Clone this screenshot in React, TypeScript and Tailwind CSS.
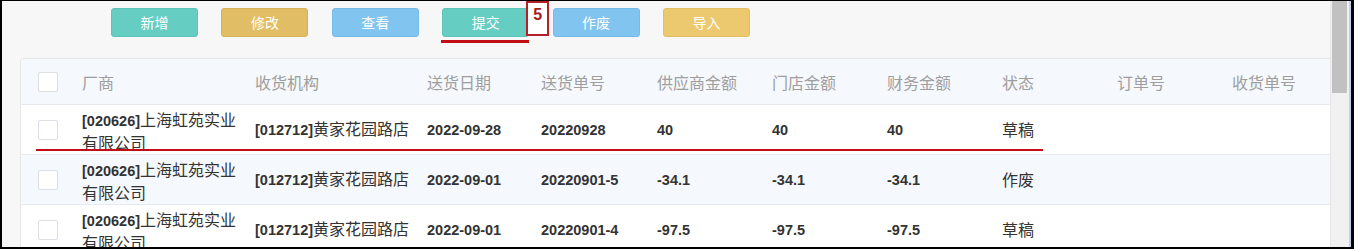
import React from "react";

const CJK = '"Noto Sans CJK SC", "Noto Sans", sans-serif';

function Mixed({ text }: { text: string }) {
  const parts = text.split(/([\u3400-\u9fff]+)/).filter((p) => p.length > 0);
  return (
    <>
      {parts.map((p, i) =>
        /[\u3400-\u9fff]/.test(p) ? (
          <span key={i} className="text-[16px] font-normal text-[#333]" style={{ fontFamily: CJK }}>
            {p}
          </span>
        ) : (
          <span key={i} className="text-[14.5px] font-bold text-[#333]" style={{ fontFamily: '"Liberation Sans", Arial, sans-serif' }}>
            {p}
          </span>
        )
      )}
    </>
  );
}

const buttons = [
  { label: "新增", cls: "bg-[#66cdc3] border-[#5cc4b9]" },
  { label: "修改", cls: "bg-[#e1bd65] border-[#d7b25a]" },
  { label: "查看", cls: "bg-[#82c4f0] border-[#76bbea]" },
  { label: "提交", cls: "bg-[#66cdc3] border-[#5cc4b9]", mark: true },
  { label: "作废", cls: "bg-[#82c4f0] border-[#76bbea]" },
  { label: "导入", cls: "bg-[#ecc86e] border-[#e2be64]" },
];

const headers = ["厂商", "收货机构", "送货日期", "送货单号", "供应商金额", "门店金额", "财务金额", "状态", "订单号", "收货单号"];

const rows = [
  ["[020626]上海虹苑实业有限公司", "[012712]黄家花园路店", "2022-09-28", "20220928", "40", "40", "40", "草稿", "", ""],
  ["[020626]上海虹苑实业有限公司", "[012712]黄家花园路店", "2022-09-01", "20220901-5", "-34.1", "-34.1", "-34.1", "作废", "", ""],
  ["[020626]上海虹苑实业有限公司", "[012712]黄家花园路店", "2022-09-01", "20220901-4", "-97.5", "-97.5", "-97.5", "草稿", "", ""],
];

const gridCols =
  "grid grid-cols-[61px_173px_172px_114px_116px_115px_115px_115px_115px_115px_1fr]";

function Checkbox() {
  return <div className="w-5 h-5 border border-[#dcdfe6] rounded-[2px] bg-white" />;
}

export default function App() {
  return (
    <div className="w-[1354px] h-[249px] box-border overflow-hidden border-l-[2px] border-t-[1px] border-r-[3px] border-b-[2px] border-black bg-[#f7f7f7] flex">
      <div className="flex-1 flex flex-col min-w-0">
        {/* toolbar */}
        <div className="h-[57px] shrink-0 pt-[7px] pl-[109px] flex gap-[23.4px]">
          {buttons.map((b) => (
            <div key={b.label} className="relative">
              <div
                className={`w-[87px] h-[29px] rounded-[3px] border flex items-center justify-center text-white text-[14px] ${b.cls}`}
                style={{ fontFamily: CJK }}
              >
                {b.label}
              </div>
              {b.mark && (
                <>
                  <div className="absolute left-[-1px] top-[32px] w-[88px] h-[2.5px] bg-[#c00d16]" />
                  <div className="absolute left-[84px] top-[-7px] w-[23px] h-[35px] bg-white border-2 border-[#b51f27] flex items-start justify-center pt-[2px]">
                    <span className="text-[16px] font-bold text-[#a81820] leading-[20px]" style={{ fontFamily: '"Liberation Sans", Arial, sans-serif' }}>
                      5
                    </span>
                  </div>
                </>
              )}
            </div>
          ))}
        </div>
        {/* table card */}
        <div className="ml-[18px] flex-1 relative bg-white border-t border-l border-[#e6e6e6] rounded-tl-[4px]">
          <div className={`${gridCols} h-[46px] bg-[#f5f8fc] border-b border-[#e6eaf0] items-center rounded-tl-[4px]`}>
            <div className="pl-[17px]">
              <Checkbox />
            </div>
            {headers.map((h) => (
              <div key={h} className="text-[16px] text-[#9e9e9e]" style={{ fontFamily: CJK }}>
                {h}
              </div>
            ))}
          </div>
          {rows.map((r, ri) => (
            <div
              key={ri}
              className={`${gridCols} h-[50px] border-b border-[#e6eaf0] items-center ${ri === 1 ? "bg-[#f5f8fc]" : "bg-white"}`}
            >
              <div className="pl-[17px]">
                <Checkbox />
              </div>
              {r.map((c, ci) => (
                <div key={ci} className={ci === 0 ? "w-[158px] leading-[21px] pt-[3px]" : "leading-[21px] whitespace-nowrap"}>
                  <Mixed text={c} />
                </div>
              ))}
            </div>
          ))}
          <div className="absolute left-[15px] top-[90px] w-[1007px] h-[2px] bg-[#c00d16]" />
        </div>
      </div>
      {/* scrollbar */}
      <div className="w-[19px] shrink-0 bg-[#f1f1f1] border-l border-[#e6e6e6] pl-[1px] pr-[2px]">
        <div className="w-[15px] h-[92px] bg-[#c1c1c1]" />
      </div>
      <div className="w-[2px] shrink-0 bg-[#bed1ef]" />
    </div>
  );
}
